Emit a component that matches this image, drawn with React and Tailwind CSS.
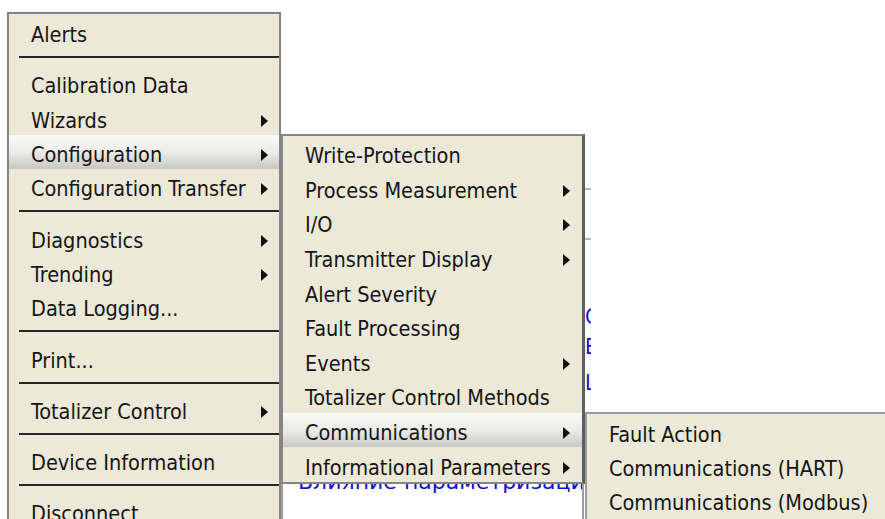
const menuFont = "font-['DejaVu_Sans_Condensed','DejaVu_Sans',sans-serif] font-stretch-condensed text-[21.5px] text-[#151515]"

const MAIN = [
  { label: 'Alerts' },
  'sep',
  { label: 'Calibration Data' },
  { label: 'Wizards', sub: true },
  { label: 'Configuration', sub: true, active: true },
  { label: 'Configuration Transfer', sub: true },
  'sep',
  { label: 'Diagnostics', sub: true },
  { label: 'Trending', sub: true },
  { label: 'Data Logging...' },
  'sep',
  { label: 'Print...' },
  'sep',
  { label: 'Totalizer Control', sub: true },
  'sep',
  { label: 'Device Information' },
  'sep',
  { label: 'Disconnect' },
]

const CONFIG = [
  { label: 'Write-Protection' },
  { label: 'Process Measurement', sub: true },
  { label: 'I/O', sub: true },
  { label: 'Transmitter Display', sub: true },
  { label: 'Alert Severity' },
  { label: 'Fault Processing' },
  { label: 'Events', sub: true },
  { label: 'Totalizer Control Methods' },
  { label: 'Communications', sub: true, active: true },
  { label: 'Informational Parameters', sub: true },
]

const COMMS = [
  { label: 'Fault Action' },
  { label: 'Communications (HART)' },
  { label: 'Communications (Modbus)' },
]

function Arrow() {
  return (
    <svg width="7" height="12" viewBox="0 0 7 12" className="shrink-0">
      <path d="M0 0 L7 6 L0 12 Z" fill="#111" />
    </svg>
  )
}

function Row({ item, h, pr }) {
  return (
    <div
      className={`flex items-center pt-[6px] pl-[22px] ${h} ${pr} ${
        item.active ? 'bg-linear-to-b from-[#fafaf8] via-[#ebebe7] to-[#c9c9c4]' : ''
      }`}
    >
      <span className="flex-1 whitespace-nowrap leading-[24px]">{item.label}</span>
      {item.sub && <Arrow />}
    </div>
  )
}

export default function App() {
  return (
    <div className={`relative w-[885px] h-[519px] overflow-hidden bg-white ${menuFont}`}>
      {/* window content behind the menus */}
      <div className="absolute left-[281px] top-[160px] w-[310px] h-[359px] flex overflow-hidden">
        <div className="w-[303px] shrink-0 flex flex-col overflow-hidden border-x-2 border-[#9c9c9c]">
          <div className="mt-auto pb-[25px] pl-[15px] whitespace-nowrap leading-[24px] font-['DejaVu_Sans',sans-serif] font-stretch-normal text-[22px] text-[#1010d0]">
            Влияние параметризации
          </div>
        </div>
        <div className="flex-1 min-w-0 flex flex-col text-[#1010d0] leading-[22px]">
          <div className="mt-[28px] h-[2px] bg-[#b8b8b8]" />
          <div className="mt-[48px] h-[2px] bg-[#b8b8b8]" />
          <div className="mt-[66px] pl-[1px] whitespace-nowrap">Сост</div>
          <div className="mt-[8px] pl-[1px] whitespace-nowrap">Ед.</div>
          <div className="mt-[14px] pl-[1px] whitespace-nowrap">Lim</div>
        </div>
      </div>

      {/* main context menu */}
      <div className="absolute left-[7px] top-[12px] w-[274px] flex flex-col border-2 border-[#858585] bg-[#ece9d8] pt-[1px] pb-[40px]">
        {MAIN.map((item, i) =>
          item === 'sep' ? (
            <div key={i} className="mt-[7px] mb-[8px] ml-[10px] h-[2px] bg-[#262626]" />
          ) : (
            <Row key={i} item={item} h="h-[34.3px]" pr="pr-[11px]" />
          )
        )}
      </div>

      {/* Configuration submenu */}
      <div className="absolute left-[281px] top-[134px] w-[304px] flex flex-col border-2 border-r-[3px] border-[#858585] border-r-[#5e5e5e] bg-[#ece9d8]">
        {CONFIG.map((item, i) => (
          <Row key={i} item={item} h="h-[34.6px]" pr="pr-[12px]" />
        ))}
      </div>

      {/* Communications submenu */}
      <div className="absolute left-[585px] top-[412px] w-[320px] h-[140px] flex flex-col border-2 border-[#9a9a9a] bg-[#ece9d8] pt-[1px]">
        {COMMS.map((item, i) => (
          <Row key={i} item={item} h="h-[34.2px]" pr="pr-[12px]" />
        ))}
      </div>
    </div>
  )
}
